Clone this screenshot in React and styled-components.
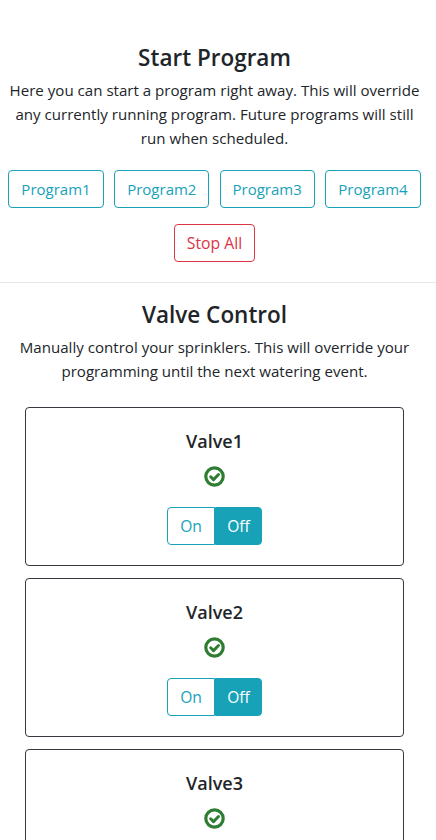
import React from "react";
import styled, { createGlobalStyle } from "styled-components";

const GlobalStyle = createGlobalStyle`
  html, body {
    margin: 0;
    background: #fff;
    color: #212529;
    font-family: "Open Sans", "Noto Sans", sans-serif;
    font-size: 15.1px;
    line-height: 24px;
  }
  * { box-sizing: border-box; }
`;

const Page = styled.div`
  height: 840px;
  overflow: hidden;
  padding-top: 42px;
`;

const Section = styled.section`
  text-align: center;
  padding: 0 15px 0 8px;
`;

const Title = styled.h3`
  margin: 0 0 4px;
  font-size: 22.5px;
  line-height: 32px;
  font-weight: 600;
`;

const Intro = styled.p`
  margin: 0 -4px;
`;

const ButtonRow = styled.div`
  display: flex;
  justify-content: space-between;
  margin-top: 20px;
`;

const StopRow = styled.div`
  display: flex;
  justify-content: center;
  margin-top: 16px;
`;

const OutlineButton = styled.button`
  width: ${(p) => p.$width}px;
  height: 38px;
  padding: 0;
  background: #fff;
  border: 1px solid ${(p) => p.$color};
  border-radius: 4px;
  color: ${(p) => p.$color};
  font-family: inherit;
  font-size: ${(p) => p.$size}px;
`;

const Divider = styled.hr`
  margin: 20px 0 16px;
  border: 0;
  border-top: 1px solid #e6e6e6;
`;

const ValveList = styled.div`
  display: flex;
  flex-direction: column;
  gap: 12px;
  margin-top: 24px;
  padding: 0 32px 0 25px;
`;

const Card = styled.div`
  height: 159px;
  flex: none;
  border: 1px solid #343a40;
  border-radius: 4px;
  text-align: center;
  padding-top: 20px;
`;

const ValveName = styled.h5`
  margin: 0;
  font-size: 18px;
  line-height: 26px;
  font-weight: 600;
`;

const Status = styled.div`
  display: flex;
  justify-content: center;
  margin-top: 12px;
`;

const Toggle = styled.div`
  display: inline-flex;
  margin-top: 19px;
`;

const ToggleButton = styled.button`
  width: ${(p) => p.$width}px;
  height: 38px;
  padding: 0;
  border: 1px solid #17a2b8;
  background: ${(p) => (p.$active ? "#17a2b8" : "#fff")};
  color: ${(p) => (p.$active ? "#fff" : "#17a2b8")};
  border-radius: ${(p) => (p.$side === "left" ? "4px 0 0 4px" : "0 4px 4px 0")};
  font-family: inherit;
  font-size: 15.6px;
`;

const StatusIcon = () => (
  <svg width="22" height="22" viewBox="0 0 22 22" fill="none">
    <circle cx="10.5" cy="10.5" r="8.7" stroke="#2e7d32" strokeWidth="3.2" />
    <path
      d="M6.7 10.8l2.8 2.8 5-5.1"
      stroke="#2e7d32"
      strokeWidth="3"
      strokeLinecap="round"
      strokeLinejoin="round"
    />
  </svg>
);

const programs = [
  ["Program1", 96],
  ["Program2", 95],
  ["Program3", 95],
  ["Program4", 96],
];

const valves = ["Valve1", "Valve2", "Valve3"];

export default function App() {
  return (
    <Page>
      <GlobalStyle />
      <Section>
        <Title>Start Program</Title>
        <Intro>
          Here you can start a program right away. This will override any
          currently running program. Future programs will still run when
          scheduled.
        </Intro>
        <ButtonRow>
          {programs.map(([name, width]) => (
            <OutlineButton key={name} $width={width} $size={15} $color="#17a2b8">
              {name}
            </OutlineButton>
          ))}
        </ButtonRow>
        <StopRow>
          <OutlineButton $width={81} $size={15.8} $color="#dc3545">
            Stop All
          </OutlineButton>
        </StopRow>
      </Section>
      <Divider />
      <Section>
        <Title>Valve Control</Title>
        <Intro>
          Manually control your sprinklers. This will override your programming
          until the next watering event.
        </Intro>
      </Section>
      <ValveList>
        {valves.map((name) => (
          <Card key={name}>
            <ValveName>{name}</ValveName>
            <Status>
              <StatusIcon />
            </Status>
            <Toggle>
              <ToggleButton $width={48} $side="left">
                On
              </ToggleButton>
              <ToggleButton $width={47} $side="right" $active>
                Off
              </ToggleButton>
            </Toggle>
          </Card>
        ))}
      </ValveList>
    </Page>
  );
}
